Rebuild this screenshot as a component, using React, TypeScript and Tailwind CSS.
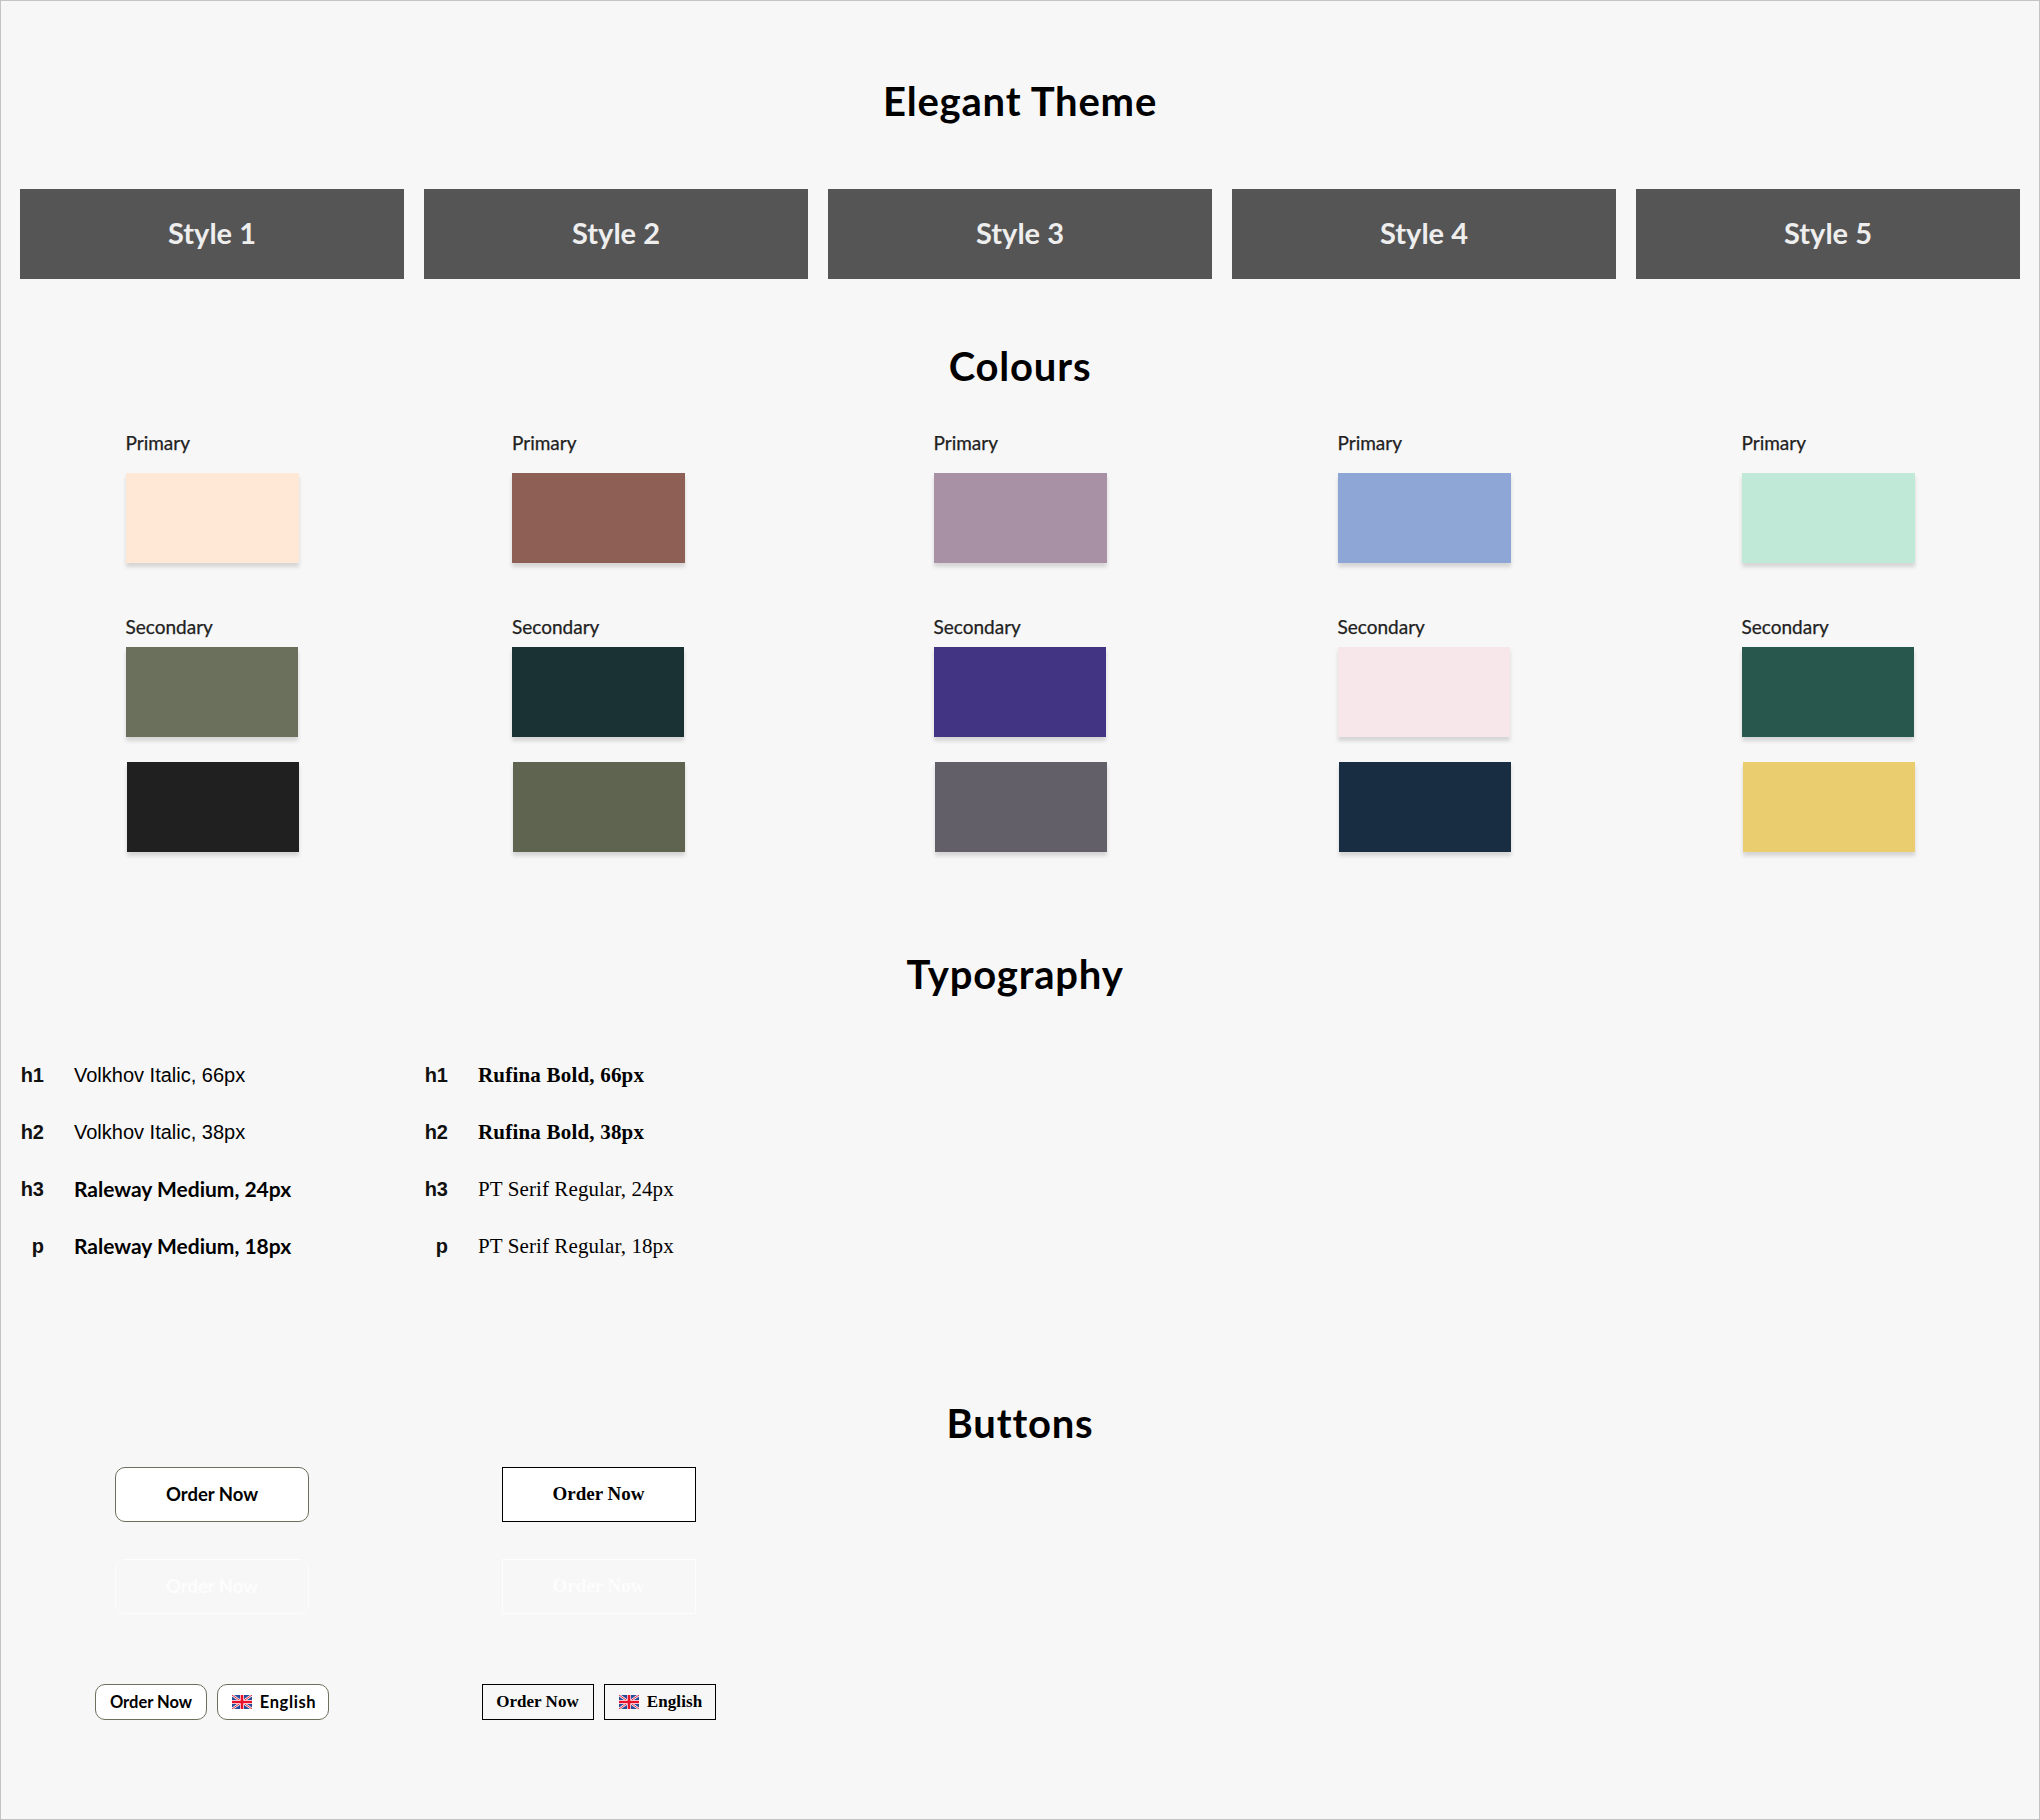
const PALETTES = [
  { primary: 'bg-[#ffe8d6]', secondary: 'bg-[#6b705c]', tertiary: 'bg-[#212020]', offset: '' },
  { primary: 'bg-[#8e6055]', secondary: 'bg-[#1a3234]', tertiary: 'bg-[#5f6450]', offset: 'pr-[35px]' },
  { primary: 'bg-[#a891a5]', secondary: 'bg-[#433483]', tertiary: 'bg-[#625f69]', offset: '' },
  { primary: 'bg-[#8ea6d6]', secondary: 'bg-[#f7e6ea]', tertiary: 'bg-[#182c42]', offset: '' },
  { primary: 'bg-[#c1e9d7]', secondary: 'bg-[#28574d]', tertiary: 'bg-[#eacd6f]', offset: '' },
]

const TYPE_SANS = [
  { tag: 'h1', text: 'Volkhov Italic, 66px', font: "font-['Liberation_Sans',sans-serif] font-normal" },
  { tag: 'h2', text: 'Volkhov Italic, 38px', font: "font-['Liberation_Sans',sans-serif] font-normal" },
  { tag: 'h3', text: 'Raleway Medium, 24px', font: "font-['Lato',sans-serif] font-bold text-[21px]" },
  { tag: 'p', text: 'Raleway Medium, 18px', font: "font-['Lato',sans-serif] font-bold text-[21px]" },
]

const TYPE_SERIF = [
  { tag: 'h1', text: 'Rufina Bold, 66px', font: "font-['Liberation_Serif',serif] font-bold text-[21px] tracking-[0.2px]" },
  { tag: 'h2', text: 'Rufina Bold, 38px', font: "font-['Liberation_Serif',serif] font-bold text-[21px] tracking-[0.2px]" },
  { tag: 'h3', text: 'PT Serif Regular, 24px', font: "font-['Liberation_Serif',serif] font-normal text-[21px] tracking-[0.1px]" },
  { tag: 'p', text: 'PT Serif Regular, 18px', font: "font-['Liberation_Serif',serif] font-normal text-[21px] tracking-[0.1px]" },
]

const SANS = "font-['Lato',sans-serif]"
const SERIF = "font-['Liberation_Serif',serif]"

function Heading({ children, className }: { children: string; className: string }) {
  return <h2 className={`h-12 text-center text-[40px] leading-[48px] font-bold tracking-[0.8px] text-black ${SANS} ${className}`}>{children}</h2>
}

function Label({ children, className }: { children: string; className: string }) {
  return <div className={`h-6 text-[19px] leading-[23px] text-[#212121] [-webkit-text-stroke:0.25px_#212121] ${SANS} ${className}`}>{children}</div>
}

function Swatch({ color, className }: { color: string; className: string }) {
  return <div className={`h-[90px] shadow-[0_4px_4px_rgba(0,0,0,0.14)] ${color} ${className}`} />
}

function TypeColumn({ rows }: { rows: typeof TYPE_SANS }) {
  return (
    <div className="flex flex-col gap-[33px]">
      {rows.map((r) => (
        <div key={r.tag} className="flex h-6 items-center text-[20px] leading-6 text-black">
          <span className="w-6 text-right font-['Liberation_Sans',sans-serif] font-bold text-[#111]">{r.tag}</span>
          <span className={`ml-[30px] whitespace-nowrap ${r.font}`}>{r.text}</span>
        </div>
      ))}
    </div>
  )
}

function UkFlag() {
  return (
    <svg width="20" height="14" viewBox="0 0 60 42" className="shrink-0">
      <rect width="60" height="42" fill="#2a4a9a" />
      <path d="M0 0 60 42M60 0 0 42" stroke="#fff" strokeWidth="7" />
      <path d="M0 0 60 42M60 0 0 42" stroke="#e8243c" strokeWidth="3" />
      <path d="M30 0V42M0 21H60" stroke="#fff" strokeWidth="12" />
      <path d="M30 0V42M0 21H60" stroke="#e8112d" strokeWidth="8" />
    </svg>
  )
}

function BigButton({ serif, disabled }: { serif?: boolean; disabled?: boolean }) {
  const shape = serif ? 'rounded-none' : 'rounded-[10px]'
  const border = disabled
    ? 'border border-[#fdfdfd]'
    : serif ? 'border-[1.5px] border-black bg-white' : 'border border-[#6b705c] bg-white'
  return (
    <button className={`flex h-[55px] w-[194px] items-center justify-center font-bold ${shape} ${border} ${serif ? `${SERIF} text-[19px]` : `${SANS} text-[18.5px]`} ${disabled ? 'text-[#fdfdfd]' : 'text-black'}`}>
      Order Now
    </button>
  )
}

function SmallButton({ serif, flag }: { serif?: boolean; flag?: boolean }) {
  const look = serif ? `border-[1.5px] border-black ${SERIF} text-[17px]` : `rounded-[10px] border border-[#6b705c] bg-white ${SANS} text-[16.5px]`
  return (
    <button className={`flex h-9 w-28 items-center justify-center gap-2 font-bold text-black ${look} ${flag ? 'pl-0.5' : ''}`}>
      {flag && <UkFlag />}
      {flag ? <span className={serif ? 'tracking-[0.1px]' : 'tracking-[0.6px]'}>English</span> : 'Order Now'}
    </button>
  )
}

export default function App() {
  return (
    <div className="box-border h-[1820px] w-[2040px] border border-[#c4c4c4] bg-[#f7f7f7] px-[19px] pt-[76px]">
      <Heading className="">Elegant Theme</Heading>

      <div className="mt-16 grid grid-cols-5 gap-5">
        {[1, 2, 3, 4, 5].map((n) => (
          <div key={n} className={`flex h-[90px] items-center justify-center bg-[#555555] pb-0.5 text-[29px] font-bold text-[#eeeeee] ${SANS}`}>
            Style {n}
          </div>
        ))}
      </div>

      <Heading className="mt-[63px]">Colours</Heading>

      <div className="mt-[41px] grid grid-cols-5 gap-5">
        {PALETTES.map((p, i) => (
          <div key={i} className={`flex justify-center ${p.offset}`}>
            <div className="w-[173px]">
              <Label className="">Primary</Label>
              <Swatch color={p.primary} className="mt-[18px]" />
              <Label className="mt-[52px]">Secondary</Label>
              <Swatch color={p.secondary} className="mt-2 mr-px" />
              <Swatch color={p.tertiary} className="mt-[25px] ml-px" />
            </div>
          </div>
        ))}
      </div>

      <Heading className="mt-[98px] pr-[10px]">Typography</Heading>

      <div className="mt-[65px] grid grid-cols-5 gap-5">
        <TypeColumn rows={TYPE_SANS} />
        <TypeColumn rows={TYPE_SERIF} />
      </div>

      <Heading className="mt-[141px]">Buttons</Heading>

      <div className="mt-5 grid grid-cols-5 gap-5">
        <div className="flex flex-col items-center">
          <BigButton />
          <div className="mt-[37px]"><BigButton disabled /></div>
          <div className="mt-[70px] flex gap-2.5">
            <SmallButton />
            <SmallButton flag />
          </div>
        </div>
        <div className="flex flex-col items-center pr-[35px]">
          <BigButton serif />
          <div className="mt-[37px]"><BigButton serif disabled /></div>
          <div className="mt-[70px] flex gap-2.5">
            <SmallButton serif />
            <SmallButton serif flag />
          </div>
        </div>
      </div>
    </div>
  )
}
